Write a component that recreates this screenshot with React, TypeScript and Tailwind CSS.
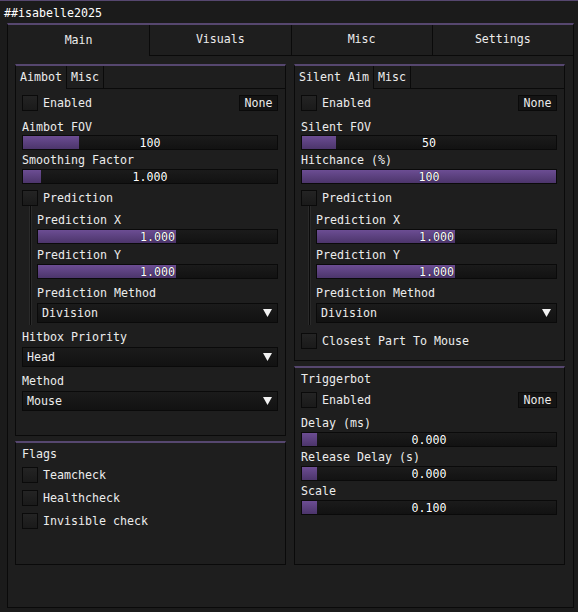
import type { ReactNode } from "react";

const frame =
  "border border-[#0a0a0a] bg-linear-to-b from-[#1b1b1b] to-[#121212]";

const Label = ({ children, className = "" }: { children: ReactNode; className?: string }) => (
  <div className={`h-[14px] leading-[16px] whitespace-pre ${className}`}>{children}</div>
);

const Checkbox = ({ label, className = "" }: { label: string; className?: string }) => (
  <div className={`flex h-[16px] items-center gap-[5px] ${className}`}>
    <div className="h-[16px] w-[16px] border border-[#0a0a0a] bg-linear-to-b from-[#242424] to-[#1a1a1a]" />
    <span className="mt-[2px] whitespace-pre">{label}</span>
  </div>
);

const KeyRow = ({ className = "" }: { className?: string }) => (
  <div className={`flex h-[16px] items-center justify-between ${className}`}>
    <Checkbox label="Enabled" />
    <div className="h-[16px] w-[39px] border border-[#0a0a0a] bg-[#141414] text-center leading-[15px]">
      None
    </div>
  </div>
);

const Slider = ({ value, fill, className = "" }: { value: string; fill: number | string; className?: string }) => (
  <div className={`relative h-[15px] ${frame} ${className}`}>
    <div
      className="absolute top-0 bottom-0 left-0 bg-linear-to-b from-[#6c4d93] to-[#4c356b]"
      style={{ width: fill }}
    />
    <div className="relative text-center leading-[14px] text-white [text-shadow:0_0_1px_#000]">{value}</div>
  </div>
);

const Combo = ({ value, className = "" }: { value: string; className?: string }) => (
  <div className={`flex h-[20px] items-center justify-between pl-[4px] pr-[5px] ${frame} ${className}`}>
    <span className="mt-[1px]">{value}</span>
    <svg width="9" height="8" viewBox="0 0 9 8">
      <polygon points="0,0 9,0 4.5,8" fill="#f2f2f2" />
    </svg>
  </div>
);

const Group = ({ children, className = "" }: { children: ReactNode; className?: string }) => (
  <div
    className={`flex flex-col border border-t-2 border-[#0a0a0a] border-t-[#56476f] bg-[#1e1e1e] ${className}`}
  >
    {children}
  </div>
);

const GroupTabs = ({ first }: { first: string }) => (
  <div className="flex h-[23px] leading-[23px]">
    <div className="border-r border-[#0a0a0a] px-[4px] whitespace-pre">{first}</div>
    <div className="border-r border-b border-[#0a0a0a] px-[4px]">Misc</div>
    <div className="flex-1 border-b border-[#0a0a0a]" />
  </div>
);

const Prediction = ({ fill }: { fill: number }) => (
  <>
    <Checkbox label="Prediction" className="mt-[6px]" />
    <div className="flex">
      <div className="ml-[7px] mr-[5px] w-[3px] border-x border-[#2a2a2a] bg-[#0b0b0b]" />
      <div className="flex flex-1 flex-col pb-[2px]">
        <Label className="mt-[6px]">Prediction X</Label>
        <Slider value="1.000" fill={fill} className="mt-[3px]" />
        <Label className="mt-[3px]">Prediction Y</Label>
        <Slider value="1.000" fill={fill} className="mt-[3px]" />
        <Label className="mt-[6px]">Prediction Method</Label>
        <Combo value="Division" className="mt-[4px]" />
      </div>
    </div>
  </>
);

const tabs = ["Main", "Visuals", "Misc", "Settings"];

export default function App() {
  return (
    <div className="h-[612px] w-[578px] overflow-hidden border-t border-[#56476f] bg-[#1b1b1b] font-['DejaVu_Sans_Mono','Liberation_Mono',monospace] text-[11.63px] text-[#ececec]">
      <div className="h-[22px] pl-[4px] leading-[24px] text-white">##isabelle2025</div>

      <div className="ml-[7px] flex h-[585px] w-[567px] flex-col border border-t-2 border-[#0a0a0a] border-t-[#56476f] bg-[#1e1e1e]">
        <div className="grid h-[31px] grid-cols-4">
          {tabs.map((t, i) => (
            <div
              key={t}
              className={`flex items-center justify-center border-[#0a0a0a] ${i > 0 ? "border-l border-b" : ""}`}
            >
              {t}
            </div>
          ))}
        </div>

        <div className="mt-[8px] flex gap-[8px] pl-[7px]">
          <div className="flex w-[271px] flex-col gap-[5px]">
            <Group className="h-[372px]">
              <GroupTabs first="Aimbot" />
              <div className="flex flex-col pl-[6px] pr-[7px]">
                <KeyRow className="mt-[6px]" />
                <Label className="mt-[8px]">Aimbot FOV</Label>
                <Slider value="100" fill={56} className="mt-[2px]" />
                <Label className="mt-[2px]">Smoothing Factor</Label>
                <Slider value="1.000" fill={18} className="mt-[3px]" />
                <Prediction fill={138} />
                <Label className="mt-[4px]">Hitbox Priority</Label>
                <Combo value="Head" className="mt-[4px]" />
                <Label className="mt-[6px]">Method</Label>
                <Combo value="Mouse" className="mt-[4px]" />
              </div>
            </Group>

            <Group className="h-[124px] pl-[6px] pr-[7px]">
              <Label className="mt-[3px]">Flags</Label>
              <Checkbox label="Teamcheck" className="mt-[7px]" />
              <Checkbox label="Healthcheck" className="mt-[7px]" />
              <Checkbox label="Invisible check" className="mt-[7px]" />
            </Group>
          </div>

          <div className="flex w-[271px] flex-col gap-[5px]">
            <Group className="h-[297px]">
              <GroupTabs first="Silent Aim" />
              <div className="flex flex-col pl-[6px] pr-[7px]">
                <KeyRow className="mt-[6px]" />
                <Label className="mt-[8px]">Silent FOV</Label>
                <Slider value="50" fill={34} className="mt-[2px]" />
                <Label className="mt-[2px]">Hitchance (%)</Label>
                <Slider value="100" fill="100%" className="mt-[3px]" />
                <Prediction fill={138} />
                <Checkbox label="Closest Part To Mouse" className="mt-[8px]" />
              </div>
            </Group>

            <Group className="h-[199px] pl-[6px] pr-[7px]">
              <Label className="mt-[3px]">Triggerbot</Label>
              <KeyRow className="mt-[7px]" />
              <Label className="mt-[7px]">Delay (ms)</Label>
              <Slider value="0.000" fill={15} className="mt-[3px]" />
              <Label className="mt-[2px]">Release Delay (s)</Label>
              <Slider value="0.000" fill={15} className="mt-[3px]" />
              <Label className="mt-[2px]">Scale</Label>
              <Slider value="0.100" fill={15} className="mt-[3px]" />
            </Group>
          </div>
        </div>
      </div>
    </div>
  );
}
